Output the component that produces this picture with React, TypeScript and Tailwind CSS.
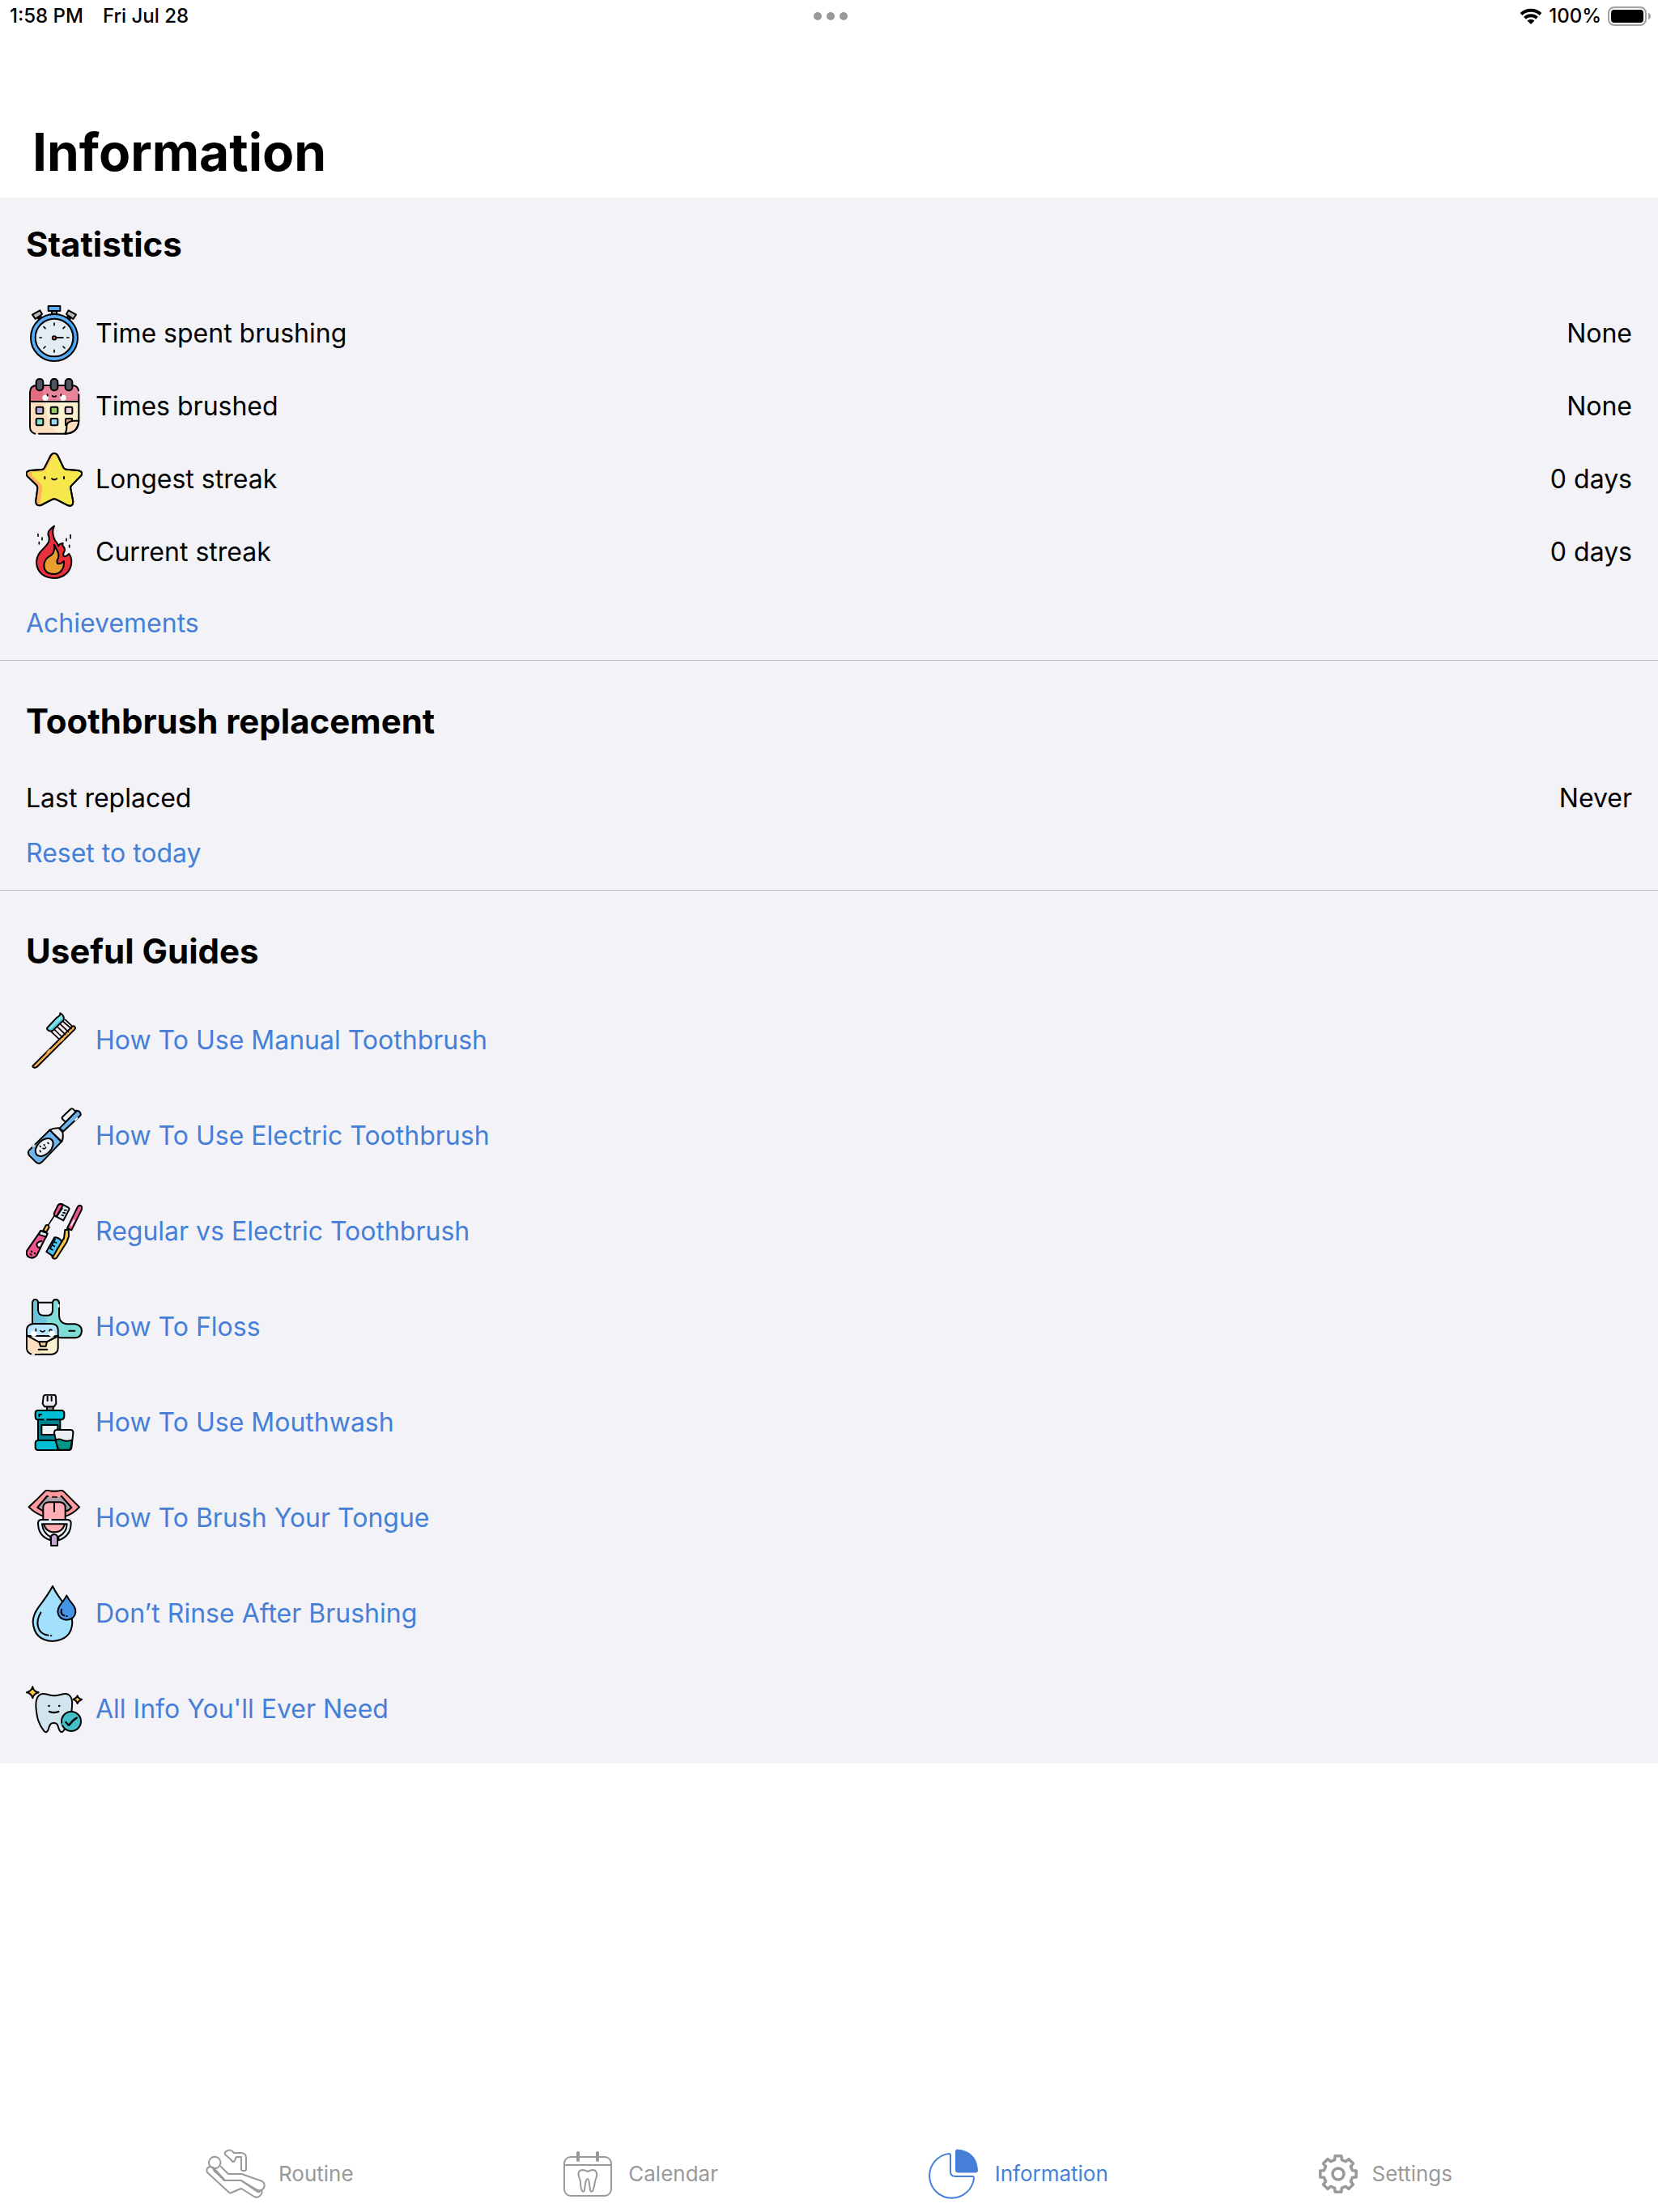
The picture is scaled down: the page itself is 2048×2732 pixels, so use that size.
import type { ReactNode } from "react";
import { clsx } from "clsx";

type ArtProps = { viewBox: string; children: ReactNode };

function Art({ viewBox, children }: ArtProps) {
  return (
    <svg
      viewBox={viewBox}
      className="size-[70px] shrink-0"
      fill="none"
      stroke="#000"
      strokeWidth="6"
      strokeLinecap="round"
      strokeLinejoin="round"
      aria-hidden="true"
    >
      {children}
    </svg>
  );
}

function StopwatchIcon() {
  return (
    <Art viewBox="96 51 210 210">
      <path d="M192 72h18v14h-18z" fill="#8e8e93" />
      <path d="M179 54h44v18h-44z" fill="#5aaefa" />
      <path d="M141 100l10-8 8 10-9 8zM261 100l-10-8-8 10 9 8z" fill="#8e8e93" />
      <path d="M120 86l28-16 8 14-25 18zM282 86l-28-16-8 14 25 18z" fill="#b9b9b9" />
      <circle cx="201" cy="171" r="87" fill="#5aaefa" />
      <path d="M250 110a80 80 0 0 1-12 130c45-38 40-90 12-130z" fill="#1e96ff" stroke="none" />
      <circle cx="201" cy="171" r="70" fill="#e4ecf3" />
      <path d="M201 117v8M201 217v8M147 171h7M248 171h7M162 131l6 6M234 204l6 6M240 131l-6 6M168 204l-6 6" strokeWidth="5" />
      <path d="M208 171h25" />
      <circle cx="201" cy="172" r="7" fill="#f0505f" strokeWidth="5" />
    </Art>
  );
}

function CalendarArt() {
  return (
    <Art viewBox="96 321 210 210">
      <path d="M111 408V372q0-24 24-24h133q24 0 24 24v36z" fill="#e6849b" stroke="none" />
      <path d="M111 408V372q0-24 24-24h24v60z" fill="#e06c7d" stroke="none" />
      <path d="M111 408h181v70q-4 44-50 49H135q-24-3-24-26z" fill="#fbdfc0" stroke="none" />
      <path d="M168 408h124v70q-4 44-50 49h-28q-46-50-46-119z" fill="#fbf0d0" stroke="none" />
      <path d="M130 527q-19-5-19-26V374q0-26 26-26h129q22 0 25 19M292 382v97q-2 46-50 48h-98M111 408h181" />
      <g fill="#4f5560">
        <rect x="134" y="324" width="26" height="43" rx="12" />
        <rect x="188" y="324" width="26" height="43" rx="12" />
        <rect x="242" y="324" width="26" height="43" rx="12" />
      </g>
      <g fill="#fff" stroke="none">
        <circle cx="168" cy="394" r="11" />
        <circle cx="234" cy="394" r="11" />
      </g>
      <path d="M176 381v5M226 381v5M194 387q7 6 14 0" strokeWidth="5" />
      <rect x="134" y="428" width="26" height="25" rx="4" fill="#b2aee0" />
      <rect x="188" y="428" width="26" height="25" rx="4" fill="#97ca61" />
      <rect x="242" y="428" width="26" height="25" rx="4" fill="#f5cfe8" />
      <rect x="134" y="471" width="26" height="25" rx="4" fill="#87e0c8" />
      <rect x="188" y="471" width="26" height="25" rx="4" fill="#9cdafa" />
      <path d="M243 495v-20q0-4 4-4h20v13z" fill="#e0a080" />
      <path d="M292 479h-20q-28 3-25 24 0 16-7 24 48-1 52-48z" fill="#fbdfc0" />
    </Art>
  );
}

function StarIcon() {
  const outline =
    "M189 36q12-14 24 0l23 48q3 5 9 5l43 4q18 3 15 14-1 5-6 9l-32 33q-5 5-3 12l9 47q0 20-19 15l-45-23q-6-3-12 0l-43 22q-21 4-19-18l6-44q1-7-4-13l-32-31q-11-11-1-19 4-3 10-4l43-3q7-1 10-7z";
  return (
    <Art viewBox="96 21 210 210">
      <path d={outline} fill="#f6e84c" />
      <path
        d="M188 40q7-9 16-7-12 8-20 30-7 19-15 28-5 6-13 6l-36 3q-8 5 4 16l27 26q7 7 6 15l-7 49q-2 12-7 16-12 0-10-16l6-44q1-7-4-13l-32-31q-10-12 9-20l43-3q7-1 10-7z"
        fill="#fdb45c"
        stroke="none"
      />
      <path d={outline} />
      <path d="M166 117v7M237 117v7M192 124q9 7 18 0" />
    </Art>
  );
}

function FlameIcon() {
  return (
    <Art viewBox="96 291 210 210">
      <path
        d="M201 299q-25 18-23 31 8 17 1 31c-13 23-44 35-44 72 1 37 28 59 65 59s65-25 65-63q-1-17-9-27-11 10-17 10-7-2-3-14 8-12 0-22-7-4-3-13-14 1-16 10-5-12-13-20-15-30-3-54z"
        fill="#e9303d"
      />
      <path
        d="M201 368q5 35-22 46-16 12-16 33c1 21 16 30 38 30s38-19 36-48q-10 11-23 10-7-8 2-21 4-18-7-32z"
        fill="#e99f30"
      />
      <path d="M141 329v8M156 342v8M145 359v7M261 332v13M246 346v8M257 370v8" strokeWidth="5" />
    </Art>
  );
}

function ManualBrushIcon() {
  return (
    <Art viewBox="36 27 210 210">
      <path d="M131 96l48-42 29 30-50 43z" fill="#f8e9ec" stroke="none" />
      <path d="M64 224L208 80q8-4 11 5 0 4-3 7L77 230q-10 6-15 0-2-4 2-6z" fill="#fbb04f" />
      <path d="M131 101l28 26M143 93l28 27M154 83l28 27M165 73l28 27M175 63l29 25M182 55l26 25" strokeWidth="5" />
      <path d="M116 84l35-37q13-6 12-16 16 8 13 25l-40 39q-10 6-18-1-6-6-2-10z" fill="#7fe0ea" />
      <path d="M123 90q6 4 11-2l33-32" stroke="#50c5dc" strokeWidth="5" />
      <path d="M117 177l8-8M165 134l8-8" stroke="#fbb04f" strokeWidth="9" />
    </Art>
  );
}

function ElectricBrushIcon() {
  return (
    <Art viewBox="36 381 210 210">
      <path d="M181 432q-16-11-9-17l30-29q8-4 15 7l8-1-38 39z" fill="#f1f2f4" />
      <path d="M160 458l62-62q5-5 11-1l5 6q3 5-1 10l-62 58z" fill="#6fb4ea" />
      <path d="M124 464q14-8 34-7l14 15q4 19-3 35z" fill="#e9eaee" />
      <path d="M124 464l43 44-72 75q-10 9-21 1l-25-25q-9-12 0-21z" fill="#6fb4ea" />
      <ellipse cx="104" cy="528" rx="39" ry="25" transform="rotate(-45 104 528)" fill="#eff0f4" />
      <path d="M88 523l3 3M117 511l3 3M103 518l2 4M88 540l2 5M99 532q7 4 11-4" strokeWidth="5" />
      <path d="M62 526l6-6M219 427l7-7" stroke="#f2f2f7" strokeWidth="6" />
    </Art>
  );
}

function BrushPairIcon() {
  return (
    <Art viewBox="96 75 210 210">
      <path d="M201 122l-23 36" strokeWidth="5" />
      <path d="M215 83q8-9 16-4l22 12q5 3 3 8l-21 40-32-17z" fill="#dcebf5" />
      <path d="M215 83q8-9 18 0l-23 41-7-3q-5-3-1-12z" fill="#f0558d" />
      <path d="M231 94l-20 30M246 101l-7 0M241 112l-7-2M235 121l-6-2" strokeWidth="5" />
      <path d="M170 157q10-4 12 7l-10 18-12-5z" fill="#fdc543" />
      <path d="M151 177l24 13-39 79q-13 14-29 6-13-9-7-24z" fill="#f0558d" />
      <path d="M151 177l25 10-5 13-28-9z" fill="#dfe9ef" />
      <path d="M154 215q-20 5-18 15 4 13 12 8" fill="#e6f0f6" />
      <path d="M116 253l2 2M128 260l2 2M113 264l2 2" />
      <path d="M288 88q8-9 15 0 3 4-1 12l-37 75-16-7z" fill="#f0558d" />
      <path d="M264 157l10-18" stroke="#f2f2f7" />
      <path d="M241 174l13-1 1 24-7 21-37 58q-6 8-15 3-5-4-2-12l43-62z" fill="#fdc543" />
      <path d="M202 202q17 0 27 15l-32 55-25-17z" fill="#50c2f2" />
      <path d="M204 208l-4 10 9 4M197 221l-4 10 9 4M190 234l-4 10 9 4" strokeWidth="5" />
    </Art>
  );
}

function FlossIcon() {
  return (
    <Art viewBox="96 432 210 210">
      <path d="M120 525v-80q4-11 11-10 9 0 10 11v29q2 19 18 19h20q15-2 16-18v-31q3-11 13-10 10 1 11 12v48q1 27 27 31h33q23 4 24 25-2 25-24 26h-52q-21-1-26-20z" fill="#7fdcd6" />
      <path d="M123 523v-75q4-10 8-10 7 2 7 9v30q3 20 21 20l14 10v16z" fill="#6cc4dc" stroke="none" />
      <path d="M141 446h54M256 551h21" />
      <path d="M99 569v-22q2-20 24-22h68q23 1 24 22v24z" fill="#b9e6ff" />
      <path d="M99 567q24 15 44 25h30q20-10 42-22v46q-2 20-23 22h-70q-21-2-23-22z" fill="#fbf0d0" />
      <path d="M102 572l40 22 8 12v29h-30q-16-4-18-20z" fill="#fbdfc0" stroke="none" />
      <path d="M145 592h29l-4 16h-20z" fill="#fbc894" />
      <path d="M143 620h32" />
      <g fill="#fff" stroke="none">
        <circle cx="125" cy="562" r="11" />
        <circle cx="192" cy="562" r="11" />
      </g>
      <path d="M102 570q22 12 41 22M215 570q-22 12-41 22M133 544v8M183 551q1-7 9-3M150 551q7 7 16 0" strokeWidth="5" />
      <path d="M120 638h6M217 455v6" stroke="#f2f2f7" strokeWidth="7" />
    </Art>
  );
}

function MouthwashIcon() {
  return (
    <Art viewBox="96 66 210 210">
      <path d="M174 112h23v14h-23z" fill="#8e8e93" />
      <path d="M161 75q2-7 9-7h28q8 0 9 7l1 26-8 11h-35l-7-11z" fill="#e9edf0" />
      <path d="M176 74v16M191 74v16" />
      <path d="M141 158h82v80h-82z" fill="#00838f" />
      <path d="M139 126h90q9 2 9 10v13q-1 9-9 11h-90q-8-1-8-11v-13q0-9 8-10z" fill="#00bcd4" />
      <path d="M166 160h4" stroke="#00bcd4" />
      <path d="M145 148v-7h8" />
      <path d="M154 180h60v36h-60z" fill="#f1f2f5" />
      <path d="M139 237h80v36h-80q-8-2-8-10v-16q0-8 8-10z" fill="#00bcd4" />
      <path d="M201 210q0-12 9-12h53q9 1 8 12l-6 54q-2 9-9 9h-34q-8 0-9-9l-10-46z" fill="#eaeff1" />
      <path d="M206 236q15-8 27 1 14 5 34-1l-5 30q-2 6-8 6h-31q-9-1-9-9z" fill="#009688" />
    </Art>
  );
}

function TongueIcon() {
  return (
    <Art viewBox="96 420 210 210">
      <path d="M107 484q30-28 58-57 8-8 17-4 19 5 38 0 10-3 17 4l57 57q-24 27-58 36h-70q-37-13-59-36z" fill="#ff999d" />
      <path d="M139 486l35-42h54l37 42q-8 9-20 13h-85z" fill="#aaa0ab" />
      <path d="M183 443q14 5 38 0" stroke="#ff999d" strokeWidth="8" />
      <path d="M194 447h17" strokeWidth="5" />
      <path d="M160 535v-52q3-16 21-17h42q18 3 19 18v52q-5 41-41 41t-41-42z" fill="#ffadb5" />
      <path d="M201 468v32" />
      <path
        d="M151 531h101q9 1 11 10 1 51-46 66v-13q30-14 31-47h-92q3 33 31 47v13q-47-15-46-66 2-9 10-10z"
        fill="#e3eff9"
      />
      <path d="M183 531h5" stroke="#e3eff9" />
      <path d="M189 627v-33q3-9 12-9t12 9v33z" fill="#c5a7d6" />
    </Art>
  );
}

function DropsIcon() {
  return (
    <Art viewBox="96 54 210 210">
      <path d="M195 57q15 32 48 72 25 35 25 63-3 64-73 69-68-3-73-71 0-26 20-54 37-48 53-79z" fill="#a2e0fc" />
      <path d="M151 155c-22 37-13 79 28 84M189 241h1" />
      <path d="M247 92q7 15 20 29 14 17 13 32-3 27-33 29-30-2-33-29 0-15 13-32 13-15 20-29z" fill="#4595e6" />
      <path d="M228 143q-5 19 10 23M247 168h1" />
    </Art>
  );
}

function HealthyToothIcon() {
  return (
    <Art viewBox="96 408 210 210">
      <path
        d="M159 456c15-1 23 7 42 7s29-8 43-7c20 2 25 24 23 46-1 38-10 70-34 94-7 4-11-1-15-10-4-17-7-22-18-22-14 0-16 7-21 24-4 10-8 13-15 7-21-25-28-50-31-94-1-22 6-44 26-45z"
        fill="#d3e5ef"
      />
      <path d="M181 501h1M219 501h1M183 522q17 7 34 0" strokeWidth="7" />
      <circle cx="264" cy="558" r="36" fill="#47bfc8" />
      <path d="M244 561l11 12q13-19 29-28" strokeWidth="7" />
      <path d="M231 568h1" stroke="#47bfc8" strokeWidth="7" />
      <path d="M121 430q3 17 22 21-18 5-22 21-4-17-22-21 18-5 22-21zM287 463q3 11 16 14-12 4-16 15-4-12-16-15 12-4 16-14z" fill="#fdc543" />
    </Art>
  );
}

type GlyphProps = { viewBox: string; className: string; children: ReactNode };

function Glyph({ viewBox, className, children }: GlyphProps) {
  return (
    <svg
      viewBox={viewBox}
      className={clsx("shrink-0", className)}
      fill="none"
      stroke="currentColor"
      strokeWidth="2"
      strokeLinecap="round"
      strokeLinejoin="round"
      aria-hidden="true"
    >
      {children}
    </svg>
  );
}

function RoutineGlyph() {
  return (
    <Glyph viewBox="24 24 74 62" className="h-[62px] w-[74px]">
      <path d="M48 31q-1-4 2-4 3-3 7 0l2 2h8q7 0 7 6v14q0 2-2 2h-2q-2 0-2-2V34h-5q-2 0-2 2-1 4-3 4-2-1-3-3z" />
      <circle cx="35.2" cy="41" r="7.2" />
      <path d="M29 46q-5 2-3 7l27 25q1 1 3 0l12-5 16 10q4 2 7-1 4-3 2-7" />
      <path d="M29 46l4 1q1 1 4 4l11 12h20l20 12q5 2 8-3 2-5-2-8L71 56q-1-1-3-1H52l-9-9" />
      <path d="M33 47q1 5 5 7l9 9M69 64l19 13q3 1 4-2" />
    </Glyph>
  );
}

function CalendarGlyph() {
  return (
    <Glyph viewBox="469 25 60 58" className="h-[58px] w-[60px]">
      <rect x="470" y="33" width="58" height="48" rx="8" />
      <path d="M470 43h58" />
      <path d="M487 28v9M511 28v9" strokeWidth="4" />
      <path d="M492 49q3 0 7 2 4-2 7-2 5 1 4 8l-2 6q-1 8-3 12-2 2-3-1l-1-8q-1-6-2-6-2 0-3 6l-1 8q-1 3-3 1-2-4-2-12l-2-6q-2-7 4-8z" />
    </Glyph>
  );
}

function ChartGlyph() {
  return (
    <Glyph viewBox="21 23 62 62" className="size-[62px]">
      <path d="M46 29q2 0 2 2v20q0 6 6 6h21q2 0 2 2a27.500 27.500 0 1 1-31-30z" />
      <path d="M54.500 26q0-2 2-2 24 2 25 26 0 2-2 2h-23q-2 0-2-2z" fill="currentColor" strokeWidth="1" />
    </Glyph>
  );
}

const gearOutline = Array.from({ length: 8 })
  .flatMap((_, tooth) =>
    [
      [-10, 22.5],
      [10, 22.5],
      [14, 18],
      [31, 18],
    ].map(([offset, radius]) => {
      const angle = ((tooth * 45 + offset) * Math.PI) / 180;
      return `${(radius * Math.sin(angle)).toFixed(2)} ${(-radius * Math.cos(angle)).toFixed(2)}`;
    }),
  )
  .join("L");

function SettingsGlyph() {
  return (
    <Glyph viewBox="-25 -25 50 50" className="size-[50px]">
      <path d={`M${gearOutline}Z`} strokeWidth="3.500" />
      <circle r="7" strokeWidth="3.500" />
    </Glyph>
  );
}

function StatusBar() {
  return (
    <div className="grid h-10 grid-cols-3 items-center pl-3 pr-2 text-2xl/10 font-medium">
      <div className="flex gap-6">
        <span>1:58 PM</span>
        <span>Fri Jul 28</span>
      </div>
      <button type="button" aria-label="Multitasking" className="flex justify-center gap-[6px]">
        <span className="size-[10px] rounded-full bg-[#999]" />
        <span className="size-[10px] rounded-full bg-[#999]" />
        <span className="size-[10px] rounded-full bg-[#999]" />
      </button>
      <div className="flex items-center justify-end gap-2">
        <svg viewBox="0 0 28 20" className="h-5 w-7" fill="none" stroke="#000" strokeWidth="4" aria-hidden="true">
          <path d="M2 7.500a17.500 17.500 0 0 1 24 0M6.500 12.200a11 11 0 0 1 15 0" />
          <path d="M14 20l-4.500-4.500q4.500-3.600 9 0z" fill="#000" stroke="none" />
        </svg>
        <span>100%</span>
        <svg viewBox="0 0 54 24" className="h-6 w-[54px]" aria-hidden="true">
          <rect x="1" y="1" width="46" height="22" rx="7" fill="none" stroke="#a0a0a0" strokeWidth="2" />
          <rect x="4" y="4" width="40" height="16" rx="4" />
          <path d="M50 8q3 1 3 4t-3 4z" fill="#a0a0a0" />
        </svg>
      </div>
    </div>
  );
}

const stats = [
  { label: "Time spent brushing", value: "None", icon: <StopwatchIcon /> },
  { label: "Times brushed", value: "None", icon: <CalendarArt /> },
  { label: "Longest streak", value: "0 days", icon: <StarIcon /> },
  { label: "Current streak", value: "0 days", icon: <FlameIcon /> },
];

const guides = [
  { title: "How To Use Manual Toothbrush", icon: <ManualBrushIcon /> },
  { title: "How To Use Electric Toothbrush", icon: <ElectricBrushIcon /> },
  { title: "Regular vs Electric Toothbrush", icon: <BrushPairIcon /> },
  { title: "How To Floss", icon: <FlossIcon /> },
  { title: "How To Use Mouthwash", icon: <MouthwashIcon /> },
  { title: "How To Brush Your Tongue", icon: <TongueIcon /> },
  { title: "Don’t Rinse After Brushing", icon: <DropsIcon /> },
  { title: "All Info You'll Ever Need", icon: <HealthyToothIcon /> },
];

const tabs = [
  { label: "Routine", icon: <RoutineGlyph />, gap: "gap-4" },
  { label: "Calendar", icon: <CalendarGlyph />, gap: "gap-5" },
  { label: "Information", icon: <ChartGlyph />, gap: "gap-5", active: true },
  { label: "Settings", icon: <SettingsGlyph />, gap: "gap-4" },
];

function SectionTitle({ children }: { children: ReactNode }) {
  return <h2 className="text-[42px] font-bold leading-[52px]">{children}</h2>;
}

export default function App() {
  return (
    <div className="flex min-h-screen flex-col bg-white font-[Inter,sans-serif] text-black">
      <StatusBar />
      <header className="px-10 pb-4 pt-[108px]">
        <h1 className="text-[64px] font-bold leading-[80px]">Information</h1>
      </header>

      <main className="bg-[#f2f2f7] text-[32px] leading-10">
        <section className="border-b border-[#b9b9be] px-8 pb-[25px] pt-8">
          <SectionTitle>Statistics</SectionTitle>
          <dl className="mt-[49px] space-y-5">
            {stats.map((stat) => (
              <div key={stat.label} className="flex items-center justify-between">
                <dt className="flex items-center gap-4">
                  {stat.icon}
                  {stat.label}
                </dt>
                <dd>{stat.value}</dd>
              </div>
            ))}
          </dl>
          <button type="button" className="mt-[33px] block text-[#467fd7]">
            Achievements
          </button>
        </section>

        <section className="border-b border-[#b9b9be] px-8 pb-[25px] pt-[49px]">
          <SectionTitle>Toothbrush replacement</SectionTitle>
          <dl className="mt-[49px] flex justify-between">
            <dt>Last replaced</dt>
            <dd>Never</dd>
          </dl>
          <button type="button" className="mt-7 block text-[#467fd7]">
            Reset to today
          </button>
        </section>

        <section className="px-8 pb-8 pt-[49px]">
          <SectionTitle>Useful Guides</SectionTitle>
          <ul className="mt-[49px] space-y-12">
            {guides.map((guide) => (
              <li key={guide.title}>
                <a href="#" className="flex items-center gap-4 text-[#467fd7]">
                  {guide.icon}
                  {guide.title}
                </a>
              </li>
            ))}
          </ul>
        </section>
      </main>

      <nav className="mt-auto flex h-[94px] items-center justify-between px-[12.4%]">
        {tabs.map((tab) => (
          <a
            key={tab.label}
            href="#"
            aria-current={tab.active ? "page" : undefined}
            className={clsx("flex items-center text-[26px] leading-8", tab.gap, tab.active ? "text-[#467fd7]" : "text-[#999]")}
          >
            {tab.icon}
            {tab.label}
          </a>
        ))}
      </nav>
    </div>
  );
}
